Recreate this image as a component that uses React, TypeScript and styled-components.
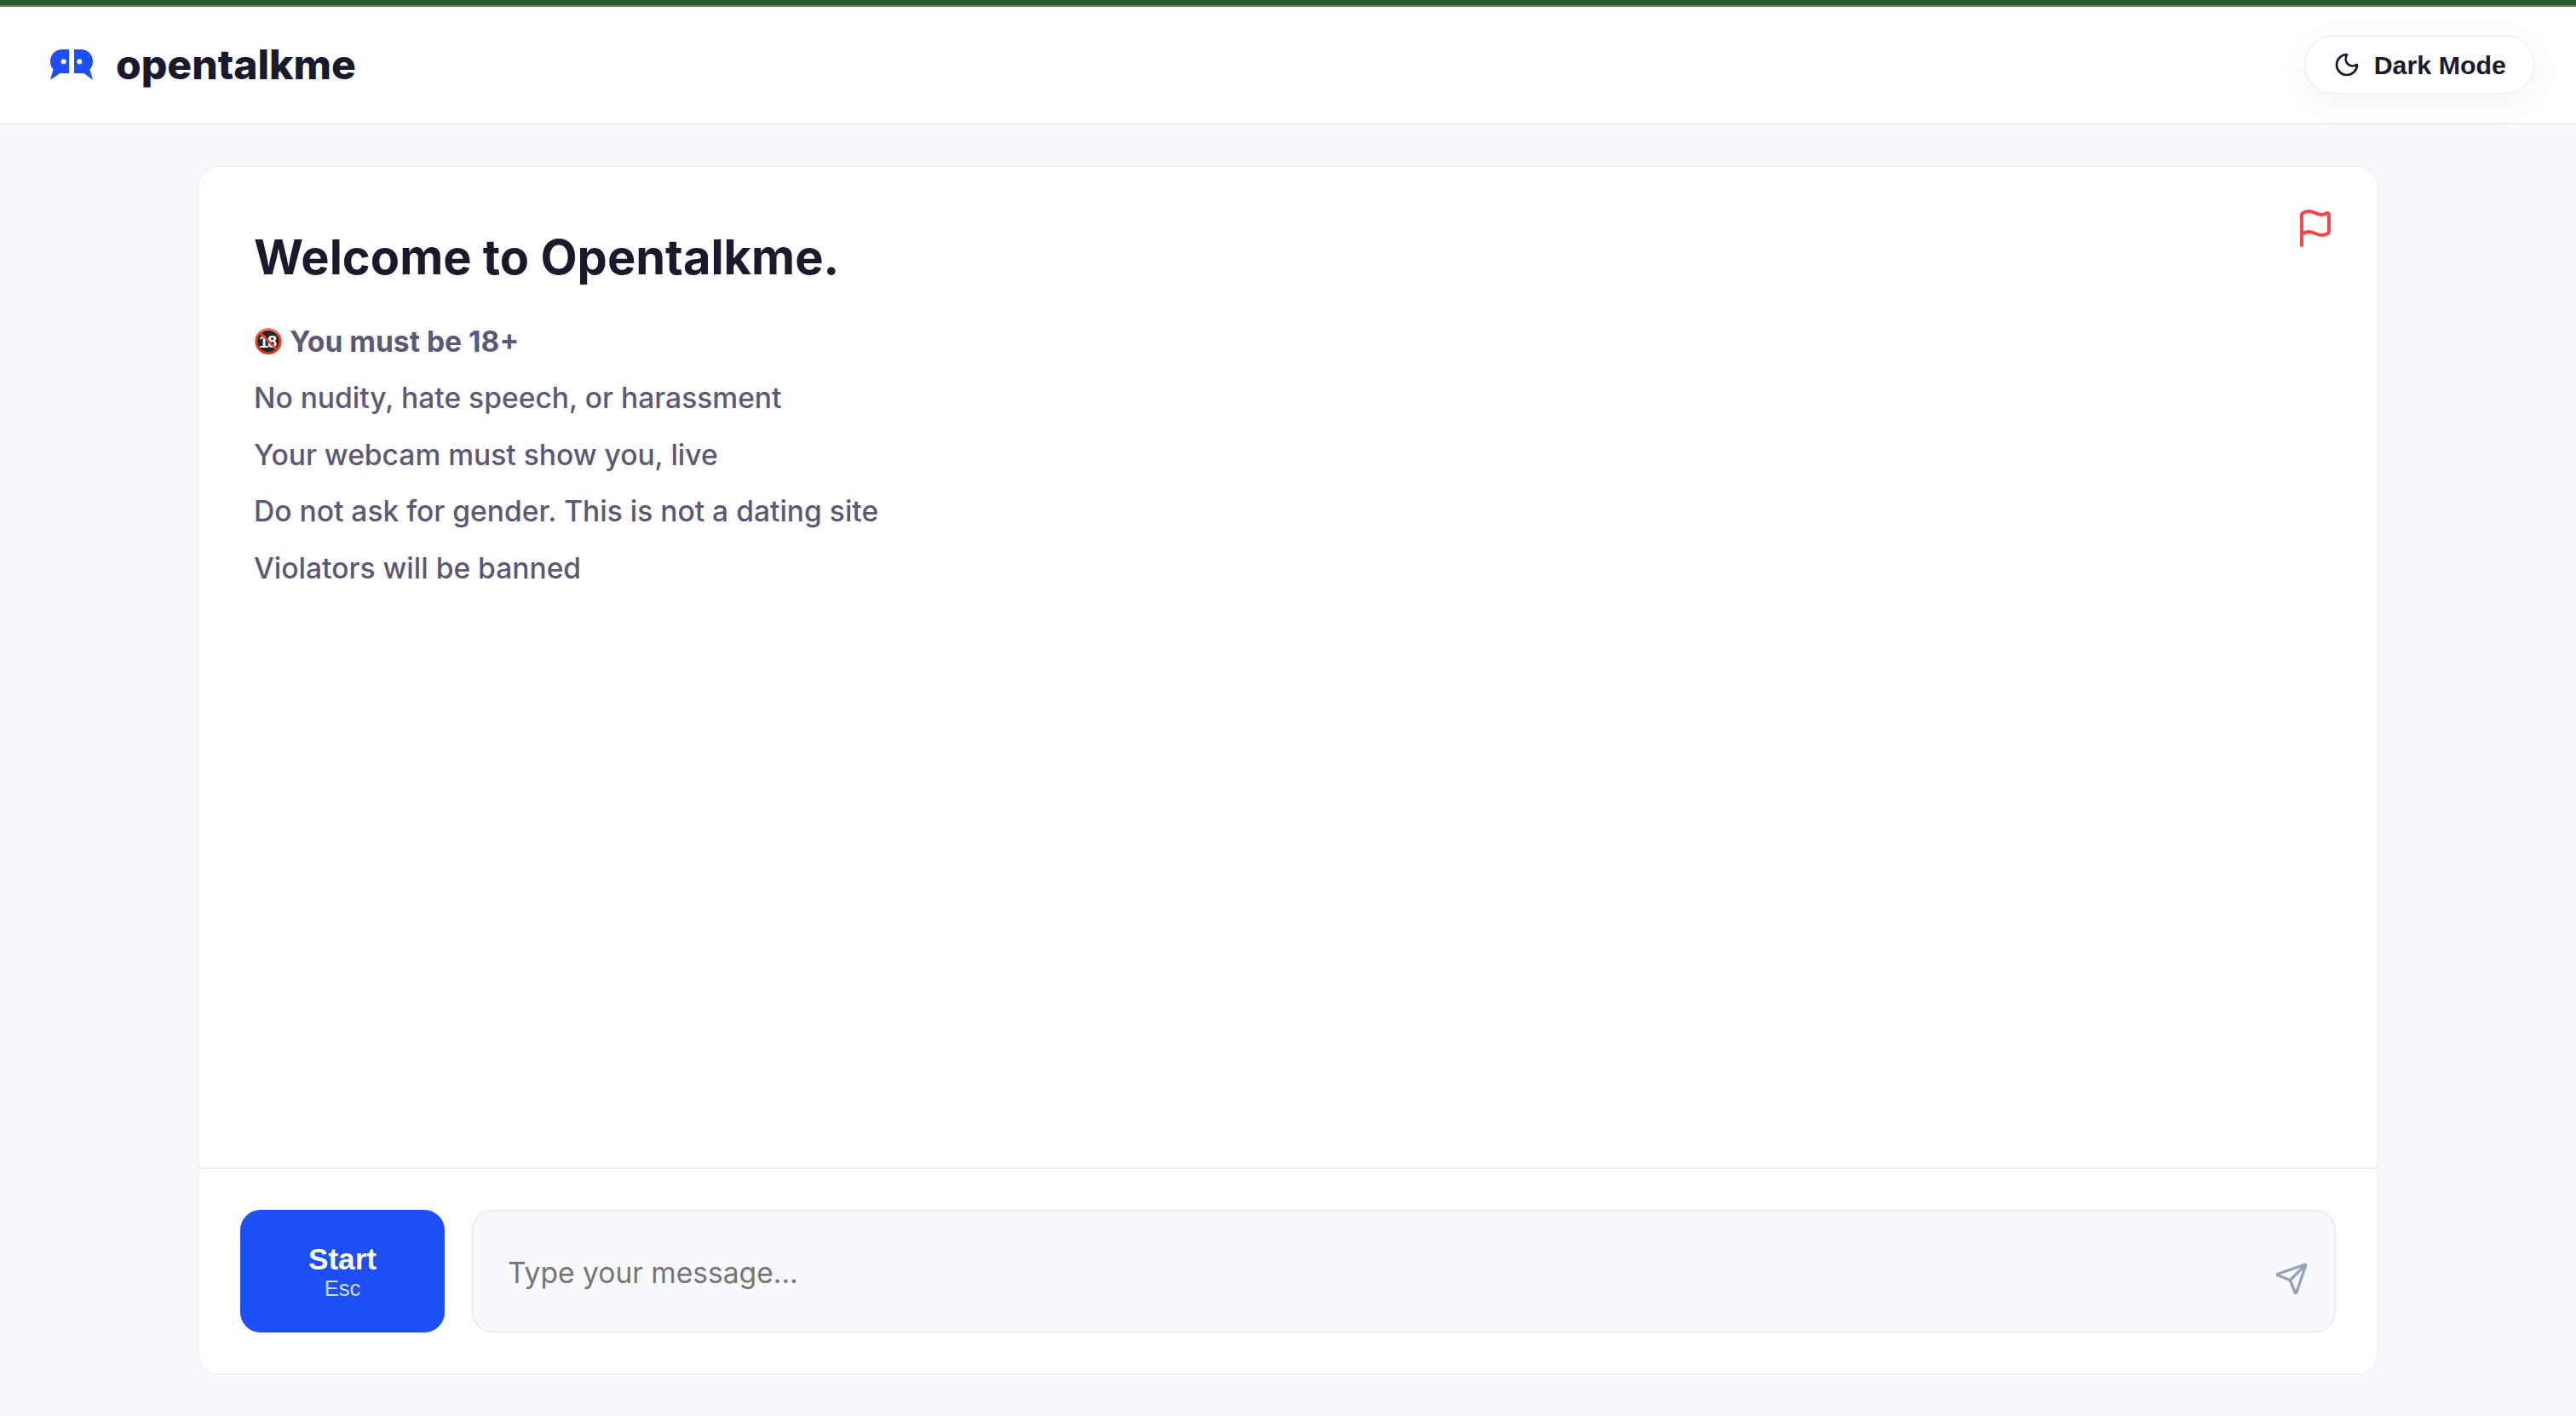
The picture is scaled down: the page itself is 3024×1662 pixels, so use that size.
import React from "react";
import styled, { createGlobalStyle } from "styled-components";
import { Flag, Moon, Send } from "lucide-react";

const GlobalStyle = createGlobalStyle`
  * { box-sizing: border-box; }
  body {
    margin: 0;
    background: #f8f9fd;
    color: #1a1a2e;
    font-family: Inter, "Liberation Sans", sans-serif;
  }
`;

const Page = styled.div`
  display: flex;
  flex-direction: column;
  height: 100vh;
`;

const TopStripe = styled.div`
  flex: none;
  height: 8px;
  background: #295e2b;
  border-bottom: 2px solid #588059;
`;

const Header = styled.header`
  flex: none;
  display: flex;
  align-items: center;
  justify-content: space-between;
  height: 138px;
  padding: 0 48px;
  background: #fff;
  border-bottom: 2px solid #f0f0f3;
`;

const Brand = styled.div`
  display: flex;
  align-items: center;
  gap: 18px;
`;

const BrandName = styled.span`
  font-size: 48px;
  line-height: 72px;
  font-weight: 800;
`;

const ThemeToggle = styled.button`
  display: flex;
  align-items: center;
  gap: 16px;
  height: 70px;
  padding: 0 32px;
  border: 2px solid #f2f2f3;
  border-radius: 40px;
  background: #fff;
  color: #1a1a2e;
  font: 600 30.4px "Liberation Sans", Arial, sans-serif;
  box-shadow: 0 8px 40px rgba(0, 0, 0, 0.05);
`;

const Main = styled.main`
  flex: 1;
  display: flex;
  justify-content: center;
  padding: 48px;
`;

const Card = styled.section`
  display: flex;
  flex-direction: column;
  width: 2560px;
  border: 2px solid #f1f2f4;
  border-radius: 24px;
  background: #fff;
`;

const Intro = styled.div`
  flex: 1;
  display: flex;
  justify-content: space-between;
  align-items: flex-start;
  padding: 48px 48px 0 64px;
`;

const Welcome = styled.div`
  padding-top: 16px;
`;

const Title = styled.h1`
  margin: 0 0 32px;
  font-size: 56px;
  line-height: 84px;
  font-weight: 700;
`;

const Rules = styled.div`
  display: flex;
  flex-direction: column;
  gap: 16px;
`;

const Rule = styled.p<{ $strong?: boolean }>`
  display: flex;
  align-items: center;
  gap: 8px;
  margin: 0;
  color: #5c5875;
  font-size: 33.6px;
  line-height: 50.4px;
  font-weight: ${(p) => (p.$strong ? 700 : 500)};
`;

const ReportButton = styled.button`
  display: flex;
  padding: 0;
  border: 0;
  background: none;
  color: #fa4343;
`;

const Composer = styled.footer`
  flex: none;
  display: flex;
  gap: 32px;
  padding: 48px;
  border-top: 2px solid #eff1f2;
`;

const StartButton = styled.button`
  display: flex;
  flex-direction: column;
  align-items: center;
  justify-content: center;
  width: 240px;
  height: 144px;
  border: 0;
  border-radius: 24px;
  background: #1c4ff7;
  color: #fff;
  font: 600 35.2px/40px "Liberation Sans", Arial, sans-serif;
`;

const Shortcut = styled.span`
  font-size: 25.6px;
  line-height: 29px;
  font-weight: 400;
  opacity: 0.8;
`;

const MessageBox = styled.div`
  position: relative;
  flex: 1;
  display: flex;
`;

const MessageInput = styled.input`
  flex: 1;
  height: 144px;
  padding: 2px 112px 0 40px;
  border: 2px solid #ebedf0;
  border-radius: 24px;
  outline: 0;
  background: #f8f9fd;
  font: 400 33.6px Inter, "Liberation Sans", sans-serif;
  &::placeholder { color: #757575; opacity: 1; }
`;

const SendButton = styled.button`
  position: absolute;
  right: 32px;
  top: 61px;
  display: flex;
  padding: 0;
  border: 0;
  background: none;
  color: #94a3b8;
`;

const Logo = () => (
  <svg width="70" height="64" viewBox="0 0 70 64" fill="#1c4ff7">
    <path d="M33 14H25C17 14 11 20 11 28c0 4 1.200 7 3.500 9.600L11 49.700l11.500-7.700H33zM26.700 25.300a3 3 0 1 0 0 6 3 3 0 0 0 0-6z" fillRule="evenodd" />
    <path d="M39 14h8c8 0 14 6 14 14 0 4-1.200 7-3.500 9.600L61 49.700 50.500 42H39zM45.300 25.300a3 3 0 1 0 0 6 3 3 0 0 0 0-6z" fillRule="evenodd" />
  </svg>
);

const AdultsOnly = () => (
  <svg width="34" height="34" viewBox="0 0 34 34">
    <defs>
      <linearGradient id="ring" x1="0" y1="0" x2="0" y2="1">
        <stop offset="0" stopColor="#ff7a5c" />
        <stop offset="0.3" stopColor="#f2432a" />
        <stop offset="1" stopColor="#e22f10" />
      </linearGradient>
    </defs>
    <circle cx="17" cy="16.500" r="13" fill="#262626" />
    <text x="16" y="23.500" fill="#fff" fontFamily="Liberation Sans, Arial, sans-serif" fontSize="20" fontWeight="700" textAnchor="middle" letterSpacing="-1">18</text>
    <path d="M7.500 7l19 19" stroke="#e8432a" strokeWidth="2.500" />
    <circle cx="17" cy="16.500" r="14.200" fill="none" stroke="url(#ring)" strokeWidth="2.800" />
  </svg>
);

export default function App() {
  return (
    <Page>
      <GlobalStyle />
      <TopStripe />
      <Header>
        <Brand>
          <Logo />
          <BrandName>opentalkme</BrandName>
        </Brand>
        <ThemeToggle>
          <Moon size={32} />
          Dark Mode
        </ThemeToggle>
      </Header>
      <Main>
        <Card>
          <Intro>
            <Welcome>
              <Title>Welcome to Opentalkme.</Title>
              <Rules>
                <Rule $strong>
                  <AdultsOnly />
                  You must be 18+
                </Rule>
                <Rule>No nudity, hate speech, or harassment</Rule>
                <Rule>Your webcam must show you, live</Rule>
                <Rule>Do not ask for gender. This is not a dating site</Rule>
                <Rule>Violators will be banned</Rule>
              </Rules>
            </Welcome>
            <ReportButton aria-label="Report">
              <Flag size={48} />
            </ReportButton>
          </Intro>
          <Composer>
            <StartButton>
              Start
              <Shortcut>Esc</Shortcut>
            </StartButton>
            <MessageBox>
              <MessageInput placeholder="Type your message..." />
              <SendButton aria-label="Send">
                <Send size={40} />
              </SendButton>
            </MessageBox>
          </Composer>
        </Card>
      </Main>
    </Page>
  );
}
